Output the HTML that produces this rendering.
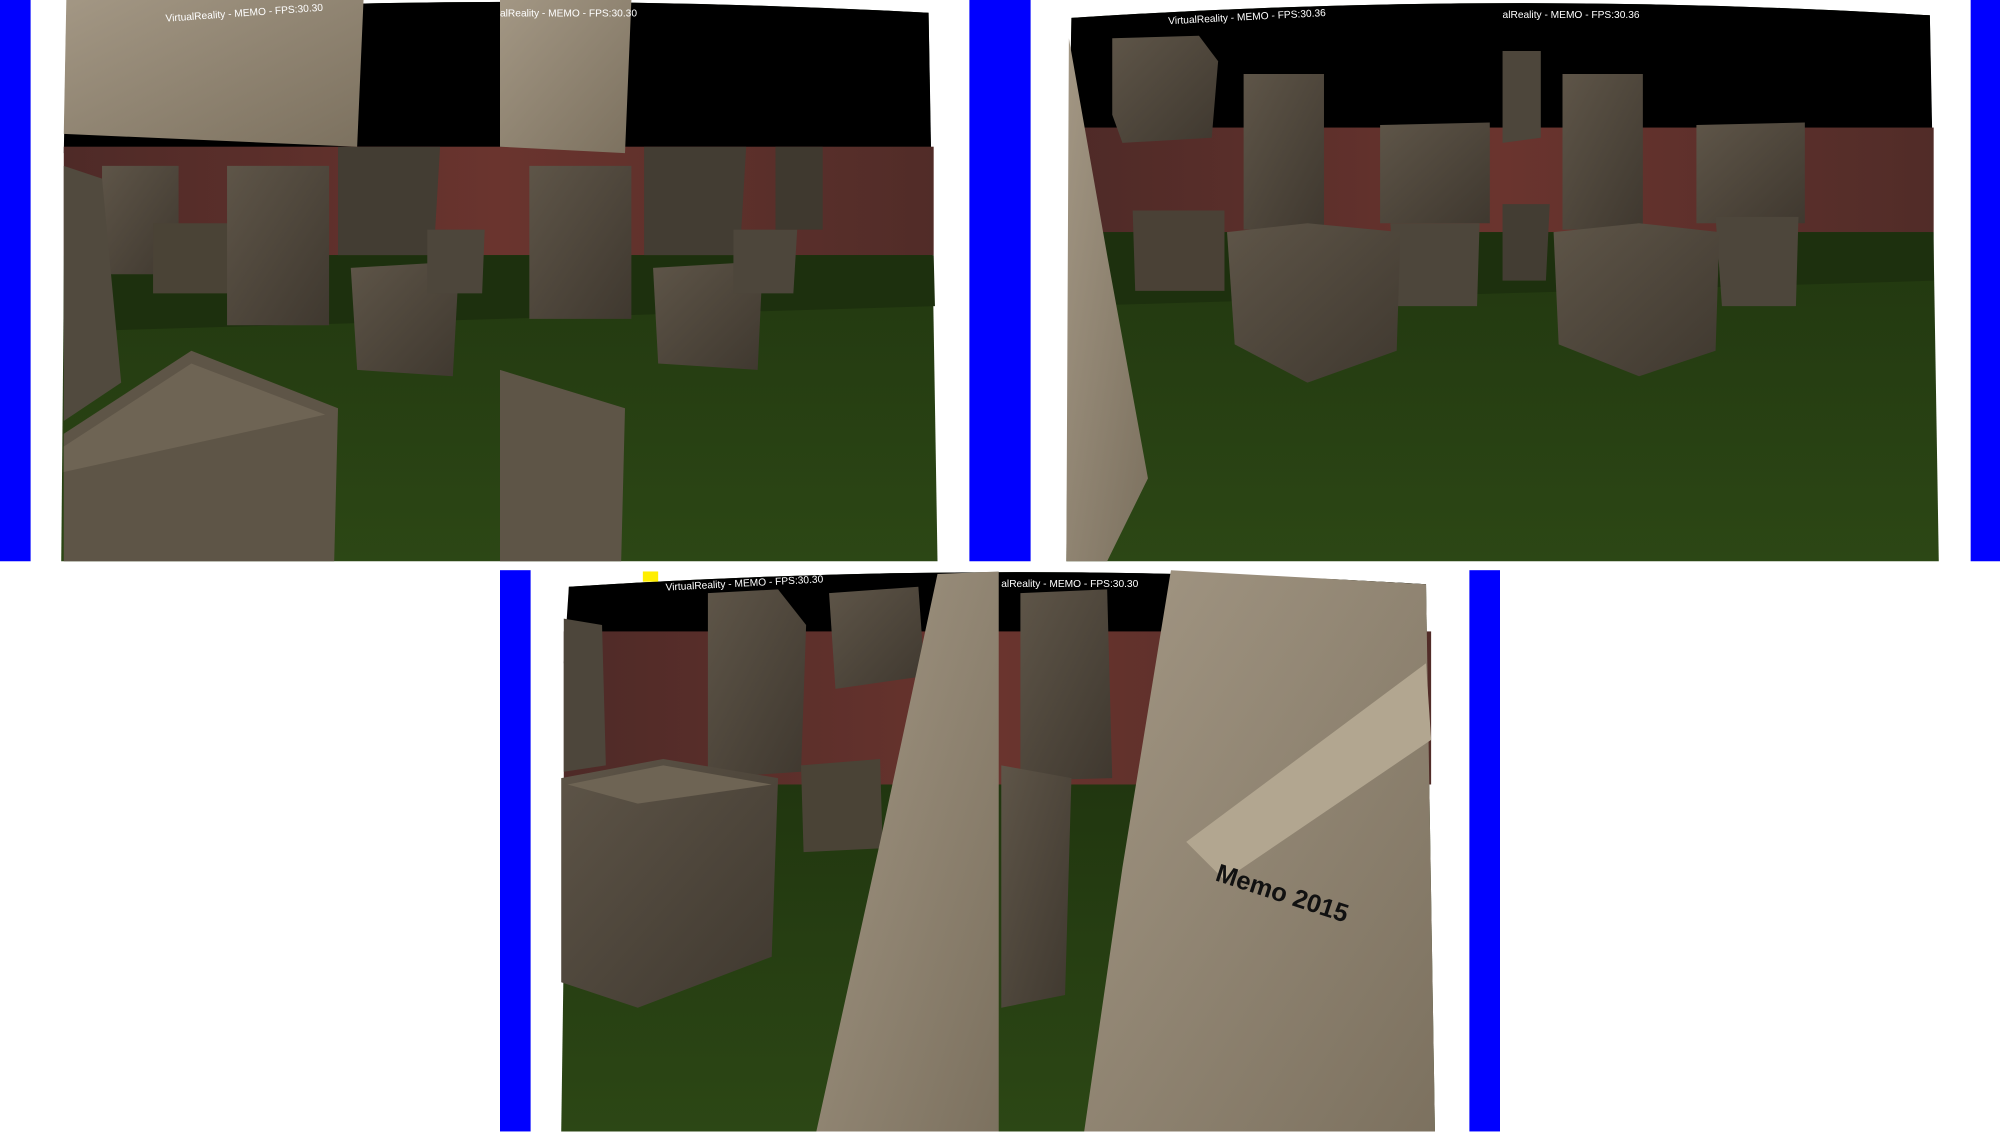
<!DOCTYPE html>
<html><head><meta charset="utf-8"><style>
html,body{margin:0;padding:0;background:#fff;width:2000px;height:1134px;overflow:hidden}
svg{display:block}
text{font-family:"Liberation Sans",sans-serif;fill:#fff;font-size:8px}
</style></head><body>
<svg width="2000" height="1134" viewBox="0 0 1568 889" preserveAspectRatio="none" xmlns="http://www.w3.org/2000/svg">
<defs>
<linearGradient id="grass" x1="0" y1="0" x2="0" y2="1"><stop offset="0" stop-color="#1a2c0c"/><stop offset="1" stop-color="#2c4715"/></linearGradient>
<linearGradient id="brick" x1="0" y1="0" x2="1" y2="0"><stop offset="0" stop-color="#4e2a27"/><stop offset="0.5" stop-color="#6a342e"/><stop offset="1" stop-color="#512c28"/></linearGradient>
<linearGradient id="lw" x1="0" y1="0" x2="1" y2="1"><stop offset="0" stop-color="#a39784"/><stop offset="1" stop-color="#7c715f"/></linearGradient>
<linearGradient id="dw" x1="0" y1="0" x2="1" y2="1"><stop offset="0" stop-color="#5e5548"/><stop offset="1" stop-color="#3f382f"/></linearGradient>
</defs>
<rect x="0" y="0" width="24" height="440" fill="#0000ff"/>
<rect x="760" y="0" width="48" height="440" fill="#0000ff"/>
<rect x="1545" y="0" width="23" height="440" fill="#0000ff"/>
<rect x="392" y="447" width="24" height="440" fill="#0000ff"/>
<rect x="1152" y="447" width="24" height="440" fill="#0000ff"/>

<g>
<path d="M52 12 Q390 -8 728 10 L735 440 L48 440 Z" fill="url(#grass)"/>
<path d="M52 12 Q390 -8 728 10 L730 120 L50 120 Z" fill="#000"/>
<rect x="50" y="115" width="682" height="85" fill="url(#brick)"/>
<polygon points="50,200 732,200 733,240 50,260" fill="#1d300e"/>
<polygon points="80,130 140,130 140,215 80,215" fill="url(#dw)"/>
<polygon points="120,175 180,175 180,230 120,230" fill="#4a4336"/>
<polygon points="178,130 258,130 258,255 178,255" fill="url(#dw)"/>
<polygon points="265,115 345,115 340,200 265,200" fill="#433d33"/>
<polygon points="275,210 360,205 355,295 280,290" fill="url(#dw)"/>
<polygon points="335,180 380,180 378,230 335,230" fill="#4d463b"/>
<polygon points="50,130 80,140 95,300 50,330" fill="#514a3e"/>
<polygon points="52,0 285,0 280,115 50,105" fill="url(#lw)"/>
<polygon points="50,340 150,275 265,320 262,440 50,440" fill="#5e5547"/>
<polygon points="50,350 150,285 255,325 50,370" fill="#6e6454"/>
<polygon points="392,0 495,0 490,120 392,115" fill="url(#lw)"/>
<polygon points="415,130 495,130 495,250 415,250" fill="url(#dw)"/>
<polygon points="505,115 585,115 580,200 505,200" fill="#433d33"/>
<polygon points="512,210 598,205 594,290 516,285" fill="url(#dw)"/>
<polygon points="575,180 625,180 622,230 575,230" fill="#4d463b"/>
<polygon points="608,115 645,115 645,180 608,180" fill="#3f392f"/>
<polygon points="392,290 490,320 487,440 392,440" fill="#5e5547"/>
<text x="130" y="17" transform="rotate(-4 130 17)">VirtualReality - MEMO - FPS:30.30</text>
<text x="392" y="13">alReality - MEMO - FPS:30.30</text>
</g>

<g>
<path d="M840 14 Q1178 -8 1513 12 L1520 440 L836 440 Z" fill="url(#grass)"/>
<path d="M840 14 Q1178 -8 1513 12 L1515 112 L838 112 Z" fill="#000"/>
<rect x="838" y="100" width="678" height="82" fill="url(#brick)"/>
<polygon points="838,182 1516,182 1516,220 838,240" fill="#1d300e"/>
<polygon points="872,30 940,28 955,48 950,108 880,112 872,90" fill="url(#dw)"/>
<polygon points="975,58 1038,58 1038,180 975,180" fill="url(#dw)"/>
<polygon points="888,165 960,165 960,228 890,228" fill="#4a4136"/>
<polygon points="1082,98 1168,96 1168,175 1082,175" fill="url(#dw)"/>
<polygon points="1090,175 1160,175 1158,240 1095,240" fill="#4d463b"/>
<polygon points="962,182 1025,175 1098,182 1095,275 1025,300 968,270" fill="url(#dw)"/>
<polygon points="838,30 868,200 900,375 868,440 836,440" fill="url(#lw)"/>
<polygon points="1178,40 1208,40 1208,108 1178,112" fill="#4d463b"/>
<polygon points="1225,58 1288,58 1288,180 1225,180" fill="url(#dw)"/>
<polygon points="1330,98 1415,96 1415,175 1330,175" fill="url(#dw)"/>
<polygon points="1345,170 1410,170 1408,240 1350,240" fill="#4d463b"/>
<polygon points="1218,182 1285,175 1348,182 1345,275 1285,295 1222,270" fill="url(#dw)"/>
<polygon points="1178,160 1215,160 1212,220 1178,220" fill="#433d33"/>
<text x="916" y="19" transform="rotate(-3 916 19)">VirtualReality - MEMO - FPS:30.36</text>
<text x="1178" y="14">alReality - MEMO - FPS:30.36</text>
</g>

<g>
<path d="M446 460 Q784 438 1118 458 L1125 887 L440 887 Z" fill="url(#grass)"/>
<path d="M446 460 Q784 438 1118 458 L1118 520 L442 520 Z" fill="#000"/>
<rect x="442" y="495" width="680" height="120" fill="url(#brick)"/>
<polygon points="555,465 610,462 632,490 628,605 555,610" fill="url(#dw)"/>
<polygon points="650,465 720,460 725,530 655,540" fill="url(#dw)"/>
<polygon points="628,600 690,595 692,665 630,668" fill="#4a4336"/>
<polygon points="442,485 472,490 475,600 442,605" fill="#4d463b"/>
<polygon points="440,610 520,595 610,610 605,750 500,790 440,770" fill="url(#dw)"/>
<polygon points="445,615 520,600 605,615 500,630" fill="#6e6454"/>
<polygon points="735,450 783,448 783,887 640,887 690,660" fill="url(#lw)"/>
<polygon points="800,465 868,462 872,610 800,612" fill="url(#dw)"/>
<polygon points="785,600 840,610 835,780 785,790" fill="url(#dw)"/>
<polygon points="918,447 1118,458 1125,887 850,887 880,680" fill="url(#lw)"/>
<polygon points="930,660 1118,520 1122,580 960,690" fill="#b2a690"/>
<text x="952" y="690" transform="rotate(18 952 690)" style="font-size:20px;fill:#111;font-weight:bold">Memo 2015</text>
<rect x="504" y="448" width="12" height="8" fill="#ffee00"/>
<text x="522" y="463" transform="rotate(-3 522 463)">VirtualReality - MEMO - FPS:30.30</text>
<text x="785" y="460">alReality - MEMO - FPS:30.30</text>
</g>
</svg>
</body></html>
